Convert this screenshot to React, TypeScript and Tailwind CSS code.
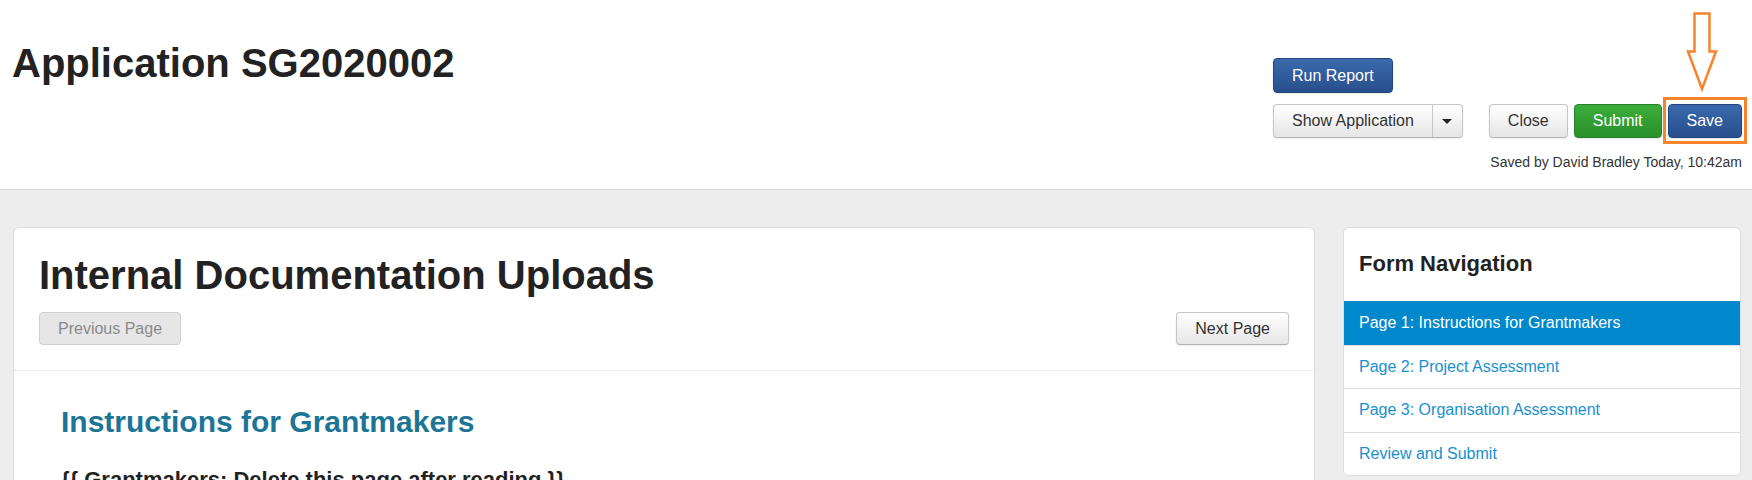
import { ReactNode } from "react";

const font = "font-['Liberation_Sans',Arial,sans-serif]";

const navItems = [
  "Page 1: Instructions for Grantmakers",
  "Page 2: Project Assessment",
  "Page 3: Organisation Assessment",
  "Review and Submit",
];

function Btn({ children, kind = "default", className = "" }: { children: ReactNode; kind?: string; className?: string }) {
  const styles: Record<string, string> = {
    default:
      "bg-linear-to-b from-white to-[#e6e6e6] border-[#c6c6c6] border-b-[#b3b3b3] text-[#333] shadow-[inset_0_1px_0_rgba(255,255,255,0.2),0_1px_2px_rgba(0,0,0,0.08)]",
    primary: "bg-linear-to-b from-[#3a6aad] to-[#284f8c] border-[#21457e] text-white shadow-[0_1px_2px_rgba(0,0,0,0.1)]",
    success: "bg-linear-to-b from-[#3cae3c] to-[#2a8f2a] border-[#268226] text-white shadow-[0_1px_2px_rgba(0,0,0,0.1)]",
    disabled: "bg-[#e6e6e6] border-[#cfcfcf] text-[#8a8a8a]",
  };
  return (
    <button className={`flex items-center justify-center whitespace-nowrap border rounded-[4px] px-[18px] text-[16px] ${styles[kind]} ${className}`}>
      {children}
    </button>
  );
}

export default function App() {
  return (
    <div className={`w-[1752px] min-h-[480px] bg-[#ededed] ${font}`}>
      {/* top bar */}
      <div className="h-[190px] bg-white border-b border-[#dcdcdc] flex justify-between">
        <h1 className="pl-[12px] pt-[41px] text-[40px] leading-[44px] font-bold text-[#222]">Application SG2020002</h1>

        <div className="pt-[58px] pr-[10px] flex flex-col items-start">
          <Btn kind="primary" className="h-[35px]">Run Report</Btn>
          <div className="mt-[11px] flex items-center">
            <div className="flex h-[34px] rounded-[4px] border border-[#c6c6c6] border-b-[#b3b3b3] bg-linear-to-b from-white to-[#e6e6e6] text-[#333] shadow-[0_1px_2px_rgba(0,0,0,0.08)]">
              <span className="px-[18px] flex items-center text-[16px] whitespace-nowrap">Show Application</span>
              <span className="w-[30px] border-l border-[#c6c6c6] flex items-center justify-center">
                <span className="w-0 h-0 border-x-[5px] border-x-transparent border-t-[5px] border-t-[#222]" />
              </span>
            </div>
            <Btn className="h-[34px] ml-[26px]">Close</Btn>
            <Btn kind="success" className="h-[34px] ml-[6px]">Submit</Btn>
            <div className="relative ml-[6px]">
              <Btn kind="primary" className="h-[34px]">Save</Btn>
              {/* highlight box */}
              <div className="absolute -left-[5px] -right-[5px] -top-[7px] -bottom-[6px] border-[3px] border-[#f7832b] pointer-events-none" />
              {/* arrow */}
              <svg className="absolute left-[18px] -top-[92px]" width="32" height="80" viewBox="0 0 32 80">
                <path d="M8.5 1.5 H23.5 V39.5 H30 L16 77 L2 39.5 H8.5 Z" fill="none" stroke="#f7832b" strokeWidth="2.5" strokeLinejoin="miter" />
              </svg>
            </div>
          </div>
          <p className="self-end mt-[14px] text-[14px] leading-[20px] text-[#333]">Saved by David Bradley Today, 10:42am</p>
        </div>
      </div>

      {/* body */}
      <div className="flex items-start pt-[37px] pl-[13px] pr-[11px] gap-[28px]">
        <div className="flex-1 bg-white border border-[#dddddd] rounded-[6px] h-[300px] overflow-hidden">
          <div className="px-[25px] pt-[25px] pb-[25px] border-b border-dotted border-[#e0e0e0]">
            <h2 className="text-[40px] leading-[44px] font-bold text-[#222]">Internal Documentation Uploads</h2>
            <div className="mt-[15px] flex justify-between">
              <Btn kind="disabled" className="h-[33px]">Previous Page</Btn>
              <Btn className="h-[33px]">Next Page</Btn>
            </div>
          </div>
          <div className="pl-[47px] pt-[33px]">
            <h3 className="text-[30px] leading-[36px] font-bold text-[#1d7595]">Instructions for Grantmakers</h3>
            <p className="mt-[26px] text-[22px] leading-[28px] font-bold text-[#222]">
              {"{{ Grantmakers: Delete this page after reading }}"}
            </p>
          </div>
        </div>

        <div className="w-[398px] bg-white border border-[#dddddd] rounded-[6px] overflow-hidden">
          <h4 className="px-[15px] pt-[22px] pb-[23px] text-[22px] leading-[28px] font-bold text-[#222]">Form Navigation</h4>
          {navItems.map((item, i) => (
            <div
              key={item}
              className={`h-[43.5px] px-[15px] flex items-center text-[16px] border-t ${
                i === 0 ? "bg-[#0088cc] border-[#0088cc] text-white" : "border-[#dddddd] text-[#1a90cf]"
              }`}
            >
              {item}
            </div>
          ))}
        </div>
      </div>
    </div>
  );
}
